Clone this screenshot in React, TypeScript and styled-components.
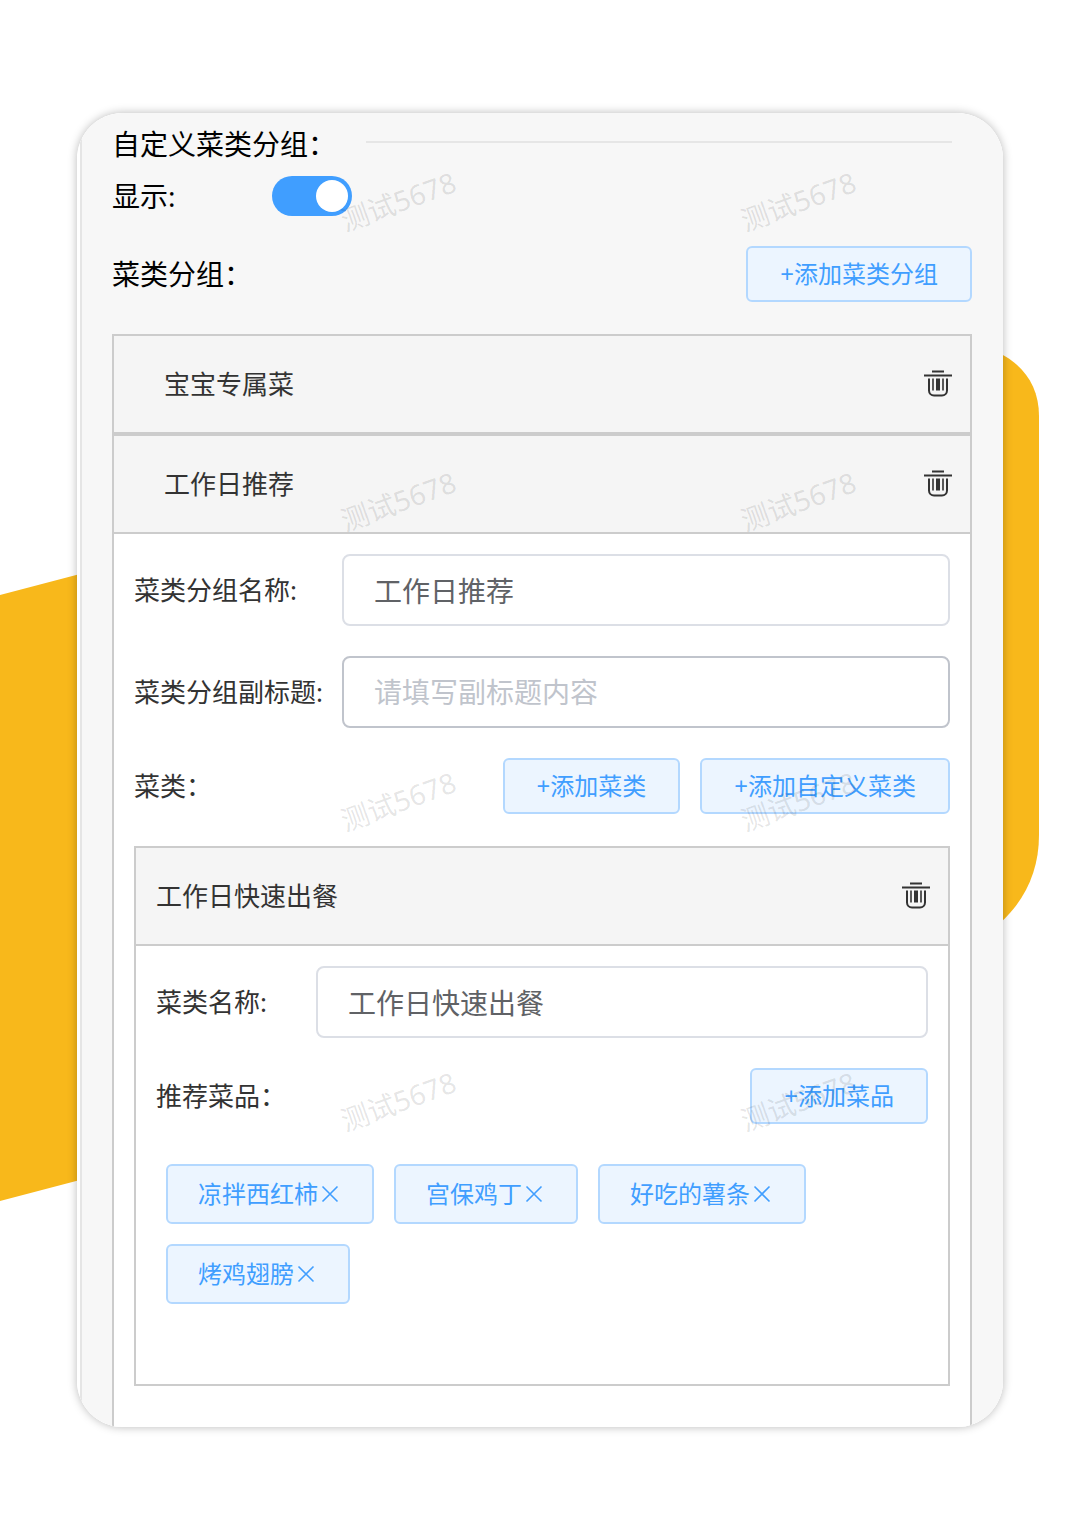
import React, { useState } from "react";
import styled, { createGlobalStyle } from "styled-components";

const GlobalStyle = createGlobalStyle`
  * { box-sizing: border-box; }
  body {
    margin: 0;
    background: #fff;
    color: #333;
    font-family: "Noto Sans", "Noto Sans CJK SC", sans-serif;
    font-size: 26px;
    line-height: 40px;
  }
  button, input { font: inherit; margin: 0; }
  h1, h2, h3, ul { margin: 0; padding: 0; font-weight: 400; font-size: inherit; }
`;

const Page = styled.main`
  position: relative;
  overflow: hidden;
  padding: 113px 77px;
`;

const LeftShape = styled.div`
  position: absolute;
  left: 0;
  top: 574px;
  width: 80px;
  height: 627px;
  background: #f8b81b;
  clip-path: polygon(0 21px, 100% 0, 100% 606px, 0 100%);
`;

const RightShape = styled.svg`
  position: absolute;
  right: 41px;
  top: 353px;
`;

const Card = styled.section`
  position: relative;
  overflow: hidden;
  padding-left: 3px;
  border-radius: 46px;
  background: #fff;
`;

const CardShadow = styled.div`
  position: relative;
  border-radius: 46px;
  box-shadow: 0 0 10px rgba(0, 0, 0, 0.28);
`;

const Panel = styled.div`
  display: flex;
  flex-direction: column;
  padding: 11px 31px 0 30px;
  border-left: 2px solid #e5e5e5;
  background: #f7f7f7;
  color: #000;
  font-size: 28px;
`;

const TitleRow = styled.div`
  display: flex;
  align-items: center;
  padding-right: 20px;
`;

const Title = styled.h1`
  width: 254px;
  white-space: nowrap;
`;

const Divider = styled.hr`
  flex: 1;
  height: 2px;
  margin: 0 0 4px;
  border: 0;
  background: #e6e6e6;
`;

const SwitchRow = styled.div`
  display: flex;
  align-items: center;
  margin-top: 12px;
`;

const SwitchLabel = styled.label`
  width: 160px;
`;

const Switch = styled.input`
  appearance: none;
  display: flex;
  align-items: center;
  width: 80px;
  height: 40px;
  padding: 0 4px;
  border-radius: 20px;
  background: #dcdfe6;
  cursor: pointer;

  &::before {
    content: "";
    width: 32px;
    height: 32px;
    border-radius: 50%;
    background: #fff;
  }
  &:checked {
    justify-content: flex-end;
    background: #409eff;
  }
`;

const ActionRow = styled.div<{ $top: number }>`
  display: flex;
  align-items: center;
  justify-content: space-between;
  margin-top: ${(p) => p.$top}px;
`;

const Actions = styled.div`
  display: flex;
  gap: 20px;
`;

const AddButton = styled.button`
  height: 56px;
  padding: 0 32px;
  border: 2px solid #b3d8ff;
  border-radius: 6px;
  background: #ecf5ff;
  color: #409eff;
  font-size: 24px;
  line-height: 40px;
  white-space: nowrap;
  cursor: pointer;
`;

const GroupList = styled.div`
  margin-top: 32px;
  border: 2px solid #ccc;
  border-width: 0 2px;
  background: #fff;
  color: #333;
  font-size: 26px;
`;

const GroupHeader = styled.header<{ $indent: number }>`
  display: flex;
  align-items: center;
  justify-content: space-between;
  height: 100px;
  padding: 0 18px 0 ${(p) => p.$indent}px;
  border: 2px solid #ccc;
  border-width: 2px 0;
  background: #f5f5f5;
`;

const IconButton = styled.button`
  display: flex;
  padding: 0;
  border: 0;
  background: none;
  color: #333;
  cursor: pointer;
`;

const GroupBody = styled.div<{ $bottom: number }>`
  padding: 20px 20px ${(p) => p.$bottom}px;
`;

const Fields = styled.div`
  display: flex;
  flex-direction: column;
  gap: 30px;
`;

const Field = styled.div`
  display: flex;
  align-items: center;
`;

const FieldLabel = styled.label<{ $width: number }>`
  flex: none;
  width: ${(p) => p.$width}px;
  white-space: nowrap;
`;

const TextInput = styled.input<{ $active?: boolean }>`
  flex: 1;
  min-width: 0;
  height: 72px;
  padding: 0 30px;
  border: 2px solid ${(p) => (p.$active ? "#c0c4cc" : "#dcdfe6")};
  border-radius: 8px;
  background: #fff;
  color: #606266;
  font-size: 28px;
  outline: none;

  &::placeholder {
    color: #c0c4cc;
    opacity: 1;
  }
`;

const CategoryBox = styled.section`
  margin-top: 32px;
  border: 2px solid #ccc;
  border-width: 0 2px 2px;
`;

const Tags = styled.ul`
  display: flex;
  flex-wrap: wrap;
  gap: 20px;
  margin: 40px 10px 0;
  list-style: none;
`;

const Tag = styled.li`
  display: flex;
  align-items: center;
  height: 60px;
  padding: 0 30px;
  border: 2px solid #b3d8ff;
  border-radius: 6px;
  background: #ecf5ff;
  color: #409eff;
  font-size: 24px;
`;

const TagClose = styled(IconButton)`
  color: inherit;
`;

const Watermarks = styled.div`
  position: absolute;
  left: 121px;
  top: 68px;
  display: grid;
  grid-template-columns: repeat(2, 400px);
  grid-auto-rows: 300px;
  justify-items: center;
  color: rgba(0, 0, 0, 0.11);
  font-size: 28px;
  pointer-events: none;
  user-select: none;
`;

const Mark = styled.span`
  height: 40px;
  transform: rotate(-20deg);
`;

const TrashIcon = () => (
  <svg width="28" height="28" viewBox="0 0 28 28" fill="none" stroke="currentColor" strokeWidth="2" aria-hidden="true">
    <path d="M8 1.5h12M0 5.5h28" />
    <path d="M5 8.5v12a5 5 0 0 0 5 5h8a5 5 0 0 0 5-5v-12" />
    <path d="M9 8.5v12M19 8.5v12" strokeWidth="1.6" />
    <path d="M14 8.5v12" strokeWidth="4" />
  </svg>
);

const CloseIcon = () => (
  <svg width="24" height="24" viewBox="0 0 24 24" fill="none" stroke="currentColor" strokeWidth="1.6" aria-hidden="true">
    <path d="M4.5 4.5l15 15M19.5 4.5l-15 15" />
  </svg>
);

const DeleteButton = ({ name }: { name: string }) => (
  <IconButton type="button" aria-label={`删除${name}`}>
    <TrashIcon />
  </IconButton>
);

export default function App() {
  const [visible, setVisible] = useState(true);
  const [groupName, setGroupName] = useState("工作日推荐");
  const [subtitle, setSubtitle] = useState("");
  const [category, setCategory] = useState("工作日快速出餐");
  const [dishes, setDishes] = useState(["凉拌西红柿", "宫保鸡丁", "好吃的薯条", "烤鸡翅膀"]);

  return (
    <>
      <GlobalStyle />
      <Page>
        <LeftShape />
        <RightShape width="60" height="570" viewBox="0 0 60 570" aria-hidden="true">
          <path d="M20 0C45 12 60 34 60 63V482C60 518 46 548 20 571Z" fill="#f8b81b" />
        </RightShape>
        <CardShadow>
          <Card>
            <Panel>
              <TitleRow>
                <Title>自定义菜类分组：</Title>
                <Divider />
              </TitleRow>
              <SwitchRow>
                <SwitchLabel htmlFor="visible">显示:</SwitchLabel>
                <Switch
                  id="visible"
                  type="checkbox"
                  role="switch"
                  checked={visible}
                  onChange={(e) => setVisible(e.target.checked)}
                />
              </SwitchRow>
              <ActionRow $top={30}>
                <h2>菜类分组：</h2>
                <AddButton type="button">+添加菜类分组</AddButton>
              </ActionRow>

              <GroupList>
                <GroupHeader $indent={50}>
                  <h3>宝宝专属菜</h3>
                  <DeleteButton name="宝宝专属菜" />
                </GroupHeader>
                <GroupHeader $indent={50}>
                  <h3>{groupName}</h3>
                  <DeleteButton name={groupName} />
                </GroupHeader>
                <GroupBody $bottom={41}>
                  <Fields>
                    <Field>
                      <FieldLabel $width={208} htmlFor="group-name">菜类分组名称:</FieldLabel>
                      <TextInput id="group-name" value={groupName} onChange={(e) => setGroupName(e.target.value)} />
                    </Field>
                    <Field>
                      <FieldLabel $width={208} htmlFor="subtitle">菜类分组副标题:</FieldLabel>
                      <TextInput
                        id="subtitle"
                        $active
                        placeholder="请填写副标题内容"
                        value={subtitle}
                        onChange={(e) => setSubtitle(e.target.value)}
                      />
                    </Field>
                  </Fields>
                  <ActionRow $top={30}>
                    <span>菜类：</span>
                    <Actions>
                      <AddButton type="button">+添加菜类</AddButton>
                      <AddButton type="button">+添加自定义菜类</AddButton>
                    </Actions>
                  </ActionRow>

                  <CategoryBox>
                    <GroupHeader $indent={20}>
                      <h3>{category}</h3>
                      <DeleteButton name={category} />
                    </GroupHeader>
                    <GroupBody $bottom={80}>
                      <Field>
                        <FieldLabel $width={160} htmlFor="category">菜类名称:</FieldLabel>
                        <TextInput id="category" value={category} onChange={(e) => setCategory(e.target.value)} />
                      </Field>
                      <ActionRow $top={30}>
                        <span>推荐菜品：</span>
                        <AddButton type="button">+添加菜品</AddButton>
                      </ActionRow>
                      <Tags>
                        {dishes.map((dish) => (
                          <Tag key={dish}>
                            {dish}
                            <TagClose
                              type="button"
                              aria-label={`移除${dish}`}
                              onClick={() => setDishes(dishes.filter((d) => d !== dish))}
                            >
                              <CloseIcon />
                            </TagClose>
                          </Tag>
                        ))}
                      </Tags>
                    </GroupBody>
                  </CategoryBox>
                </GroupBody>
              </GroupList>
            </Panel>
            <Watermarks aria-hidden="true">
              {Array.from({ length: 8 }, (_, i) => (
                <Mark key={i}>测试5678</Mark>
              ))}
            </Watermarks>
          </Card>
        </CardShadow>
      </Page>
    </>
  );
}
